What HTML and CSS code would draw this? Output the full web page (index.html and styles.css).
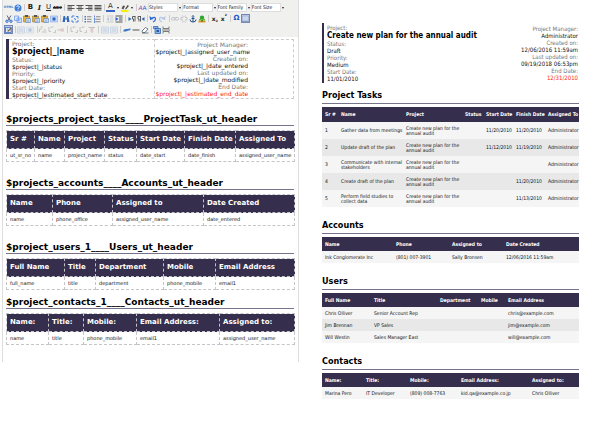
FILE: index.html
```html
<!DOCTYPE html>
<html lang="en">
<head>
<meta charset="utf-8">
<title>Project report template</title>
<link rel="stylesheet" href="styles.css">
</head>
<body>
<svg class="sprite" aria-hidden="true">
  <symbol id="help" viewBox="0 0 16 16"><circle cx="8" cy="8" r="7" fill="#3d7edb"/><path d="M5.500 6a2.500 2.500 0 1 1 3.500 2.300q-1 .5-1 1.700M8 11.500v2" fill="none" stroke="#fff" stroke-width="1.800"/></symbol>
  <symbol id="lines" viewBox="0 0 16 16"><path d="M1 3h14M1 6h14M1 9h14M1 12h14" stroke="#444" stroke-width="1.800"/></symbol>
  <symbol id="left" viewBox="0 0 16 16"><path d="M1 3h14M1 6h9M1 9h14M1 12h9" stroke="#444" stroke-width="1.800"/></symbol>
  <symbol id="center" viewBox="0 0 16 16"><path d="M1 3h14M4 6h8M1 9h14M4 12h8" stroke="#444" stroke-width="1.800"/></symbol>
  <symbol id="right" viewBox="0 0 16 16"><path d="M1 3h14M6 6h9M1 9h14M6 12h9" stroke="#444" stroke-width="1.800"/></symbol>
  <symbol id="marker" viewBox="0 0 16 16"><path d="M0 12h15v4H0z" fill="#f4f000"/><path d="M1 9l3-6 4 1-3 7zM8 10l5-8 3 2-6 7z" fill="#555"/></symbol>
  <symbol id="cut" viewBox="0 0 16 16"><path d="M4 1l6 10M12 1L6 11" stroke="#557" stroke-width="1.800"/><circle cx="4" cy="12.500" r="2.300" fill="none" stroke="#2565c7" stroke-width="2"/><circle cx="12" cy="12.500" r="2.300" fill="none" stroke="#2565c7" stroke-width="2"/></symbol>
  <symbol id="copy" viewBox="0 0 16 16"><path d="M1 2h8v9H1zM6 6h9v9H6z" fill="#dceaff" stroke="#5a8de0" stroke-width="1.300"/><path d="M8 9h5M8 12h5" stroke="#5a8de0"/></symbol>
  <symbol id="paste" viewBox="0 0 16 16"><path d="M1 2h12v12H1z" fill="#e5b23c" stroke="#8b6824"/><path d="M4 0h6v4H4z" fill="#555"/><path d="M6 7h9v8H6z" fill="#e6f0ff" stroke="#3465b8"/><path d="M8 10h5M8 12.500h5" stroke="#3465b8"/></symbol>
  <symbol id="all" viewBox="0 0 16 16"><path d="M1 2h14v12H1z" fill="#c8dafa" stroke="#7598db"/><path d="M5 5h6v6H5z" fill="#2b63c5"/></symbol>
  <symbol id="find" viewBox="0 0 16 16"><path d="M3 2h3l1 5h2l1-5h3l2 12h-5V9H6v5H1z" fill="#3268b8"/></symbol>
  <symbol id="replace" viewBox="0 0 16 16"><path d="M2 6V2h5M9 14h5v-4M10 3h4v4M2 10v4h4" fill="none" stroke="#3b7bdd" stroke-width="1.800"/><path d="M6 7l4 2" stroke="#3b7bdd" stroke-width="2"/></symbol>
  <symbol id="list" viewBox="0 0 16 16"><path d="M1 2h3v3H1zM1 7h3v3H1zM1 12h3v3H1z" fill="#4777c8"/><path d="M6 3.500h9M6 8.500h9M6 13.500h9" stroke="#666" stroke-width="1.500"/></symbol>
  <symbol id="numbers" viewBox="0 0 16 16"><path d="M3 1v4M2 7h2v3H2M2 12h2v3H2" fill="none" stroke="#3268c8" stroke-width="1.500"/><path d="M6 3.500h9M6 8.500h9M6 13.500h9" stroke="#666" stroke-width="1.500"/></symbol>
  <symbol id="outdent" viewBox="0 0 16 16"><path d="M1 2h14M8 6h7M8 10h7M1 14h14" stroke="#555" stroke-width="1.500"/><path d="M6 4v8L1 8z" fill="#2565c7"/></symbol>
  <symbol id="indent" viewBox="0 0 16 16"><path d="M1 2h14M8 6h7M8 10h7M1 14h14" stroke="#444" stroke-width="1.800"/><path d="M1 4v8l6-4z" fill="#2565c7"/></symbol>
  <symbol id="ltr" viewBox="0 0 16 16"><path d="M1 4v8l6-4z" fill="#3268b8"/><path d="M15 3H9v5h2v5M14 3v10" fill="none" stroke="#333" stroke-width="1.500"/></symbol>
  <symbol id="rtl" viewBox="0 0 16 16"><path d="M15 4v8L9 8z" fill="#3268b8"/><path d="M8 3H2v5h2v5M7 3v10" fill="none" stroke="#333" stroke-width="1.500"/></symbol>
  <symbol id="undo" viewBox="0 0 16 16"><path d="M5 7q8-5 8 1 0 4-5 6" fill="none" stroke="#2565d7" stroke-width="2.500"/><path d="M1 2l1 8 7-2z" fill="#2565d7"/></symbol>
  <symbol id="redo" viewBox="0 0 16 16"><path d="M11 7Q3 2 3 8q0 4 5 6" fill="none" stroke="#2565d7" stroke-width="2.500"/><path d="M15 2l-1 8-7-2z" fill="#2565d7"/></symbol>
  <symbol id="link" viewBox="0 0 16 16"><rect x="1" y="5" width="7" height="5" rx="2" fill="none" stroke="#557" stroke-width="2"/><rect x="8" y="5" width="7" height="5" rx="2" fill="none" stroke="#557" stroke-width="2"/></symbol>
  <symbol id="unlink" viewBox="0 0 16 16"><path d="M6 5H2v5h4M10 5h4v5h-4M5 1l2 3M11 1L9 4M5 15l2-3M11 15l-2-3" fill="none" stroke="#557" stroke-width="1.800"/></symbol>
  <symbol id="anchor" viewBox="0 0 16 16"><circle cx="8" cy="3" r="1.800" fill="none" stroke="#24538f" stroke-width="1.500"/><path d="M8 5v9M5 7h6M2 9q0 5 6 5t6-5" fill="none" stroke="#24538f" stroke-width="2"/></symbol>
  <symbol id="image" viewBox="0 0 16 16"><path d="M1 11h14v4H1z" fill="#d79b32"/><path d="M6 8h4v5H6z" fill="#765020"/><circle cx="8" cy="5.500" r="4.500" fill="#35a436"/><path d="M2 8h12v3H2z" fill="#5cbf35"/></symbol>
  <symbol id="guides" viewBox="0 0 16 16"><path d="M1 1h14v14H1z" fill="#c9d5ee" stroke="#8292b8"/><path d="M1 12h14v3H1z" fill="#8999bf"/></symbol>
  <symbol id="table" viewBox="0 0 16 16"><path d="M1 2h13v12H1z" fill="#fff" stroke="#3467b7" stroke-width="2"/><path d="M1 6h13M1 10h13M6 2v12" stroke="#6d95d8"/><path d="M14 3l-7 8" stroke="#7b5a2b" stroke-width="2.500"/></symbol>
  <symbol id="grid" viewBox="0 0 16 16"><path d="M1 2h14v12H1z" fill="#eaf2ff" stroke="#577fba" stroke-width="1.500"/><path d="M3 6h10M3 10h10" stroke="#3d70c4" stroke-width="2"/></symbol>
  <symbol id="row" viewBox="0 0 16 16"><path d="M1 12V6h5M6 12h9M9 8h5M3 2h5" fill="none" stroke="#555" stroke-width="1.800"/></symbol>
  <symbol id="remove" viewBox="0 0 16 16"><path d="M1 8h13" stroke="#555" stroke-width="2"/><path d="M8 4l5 8M13 4l-5 8" stroke="#d34343" stroke-width="1.500"/></symbol>
  <symbol id="column" viewBox="0 0 16 16"><path d="M2 2v9h4M6 4V2h5M11 13h4V8" fill="none" stroke="#555" stroke-width="1.800"/></symbol>
  <symbol id="drop" viewBox="0 0 16 16"><path d="M1 3h13M8 3v11" stroke="#555" stroke-width="2"/><path d="M4 5l7 6M11 5l-7 6" stroke="#d34343" stroke-width="1.500"/></symbol>
  <symbol id="pen" viewBox="0 0 16 16"><path d="M0 10q2-5 8-4l7-1v3l-7 2q-4 2-8 0z" fill="#3977c7"/></symbol>
  <symbol id="rule" viewBox="0 0 16 16"><path d="M1 8h14" stroke="#555" stroke-width="2"/></symbol>
  <symbol id="eraser" viewBox="0 0 16 16"><path d="M2 10l7-7 5 3-6 7H3z" fill="#fff" stroke="#456" stroke-width="1.500"/><path d="M2 14h13" stroke="#456" stroke-width="1.500"/></symbol>
  <symbol id="layer" viewBox="0 0 16 16"><path d="M1 1h9v4H1zM4 5h11v10H4z" fill="#8fb5e8" stroke="#2d62ac" stroke-width="1.500"/><path d="M7 8h5v4H7z" fill="#24579e"/></symbol>
  <symbol id="break" viewBox="0 0 16 16"><path d="M2 1v4h12V1M2 15v-4h12v4M0 8h16" fill="none" stroke="#555" stroke-width="1.500"/></symbol>
</svg>
<main class="page">
  <section class="editor">
    <div class="toolbar" role="toolbar" aria-label="Formatting">
      <div class="tools">
        <div class="group"><button class="html" aria-label="Edit HTML source">HTML</button><button aria-label="Help"><svg><use href="#help"/></svg></button></div>
        <div class="group"><button class="bold">B</button><button class="italic">I</button><button class="under">U</button><button class="strike">ABC</button></div>
        <div class="group"><button aria-label="Align left"><svg><use href="#left"/></svg></button><button aria-label="Align center"><svg><use href="#center"/></svg></button><button aria-label="Align right"><svg><use href="#right"/></svg></button><button aria-label="Justify"><svg><use href="#lines"/></svg></button></div>
        <div class="group"><button class="colour">A</button><button class="arrow" aria-label="Text colours"></button><button aria-label="Highlight"><svg><use href="#marker"/></svg></button><button class="arrow" aria-label="Highlight colours"></button></div>
        <div class="group"><button class="style"><i>A</i>A</button></div>
        <div class="pickers">
          <span class="picker"><select aria-label="Styles"><option>Styles</option></select></span>
          <span class="picker"><select aria-label="Format"><option>Format</option></select></span>
          <span class="picker"><select aria-label="Font family"><option>Font Family</option></select></span>
          <span class="picker"><select aria-label="Font size"><option>Font Size</option></select></span>
        </div>
      </div>
      <div class="tools tools-edit">
        <div class="group"><button aria-label="Cut"><svg><use href="#cut"/></svg></button><button aria-label="Copy"><svg><use href="#copy"/></svg></button><button aria-label="Paste"><svg><use href="#paste"/></svg></button><button aria-label="Paste text"><svg><use href="#paste"/></svg></button><button aria-label="Paste from Word"><svg><use href="#paste"/></svg></button><button aria-label="Select all"><svg><use href="#all"/></svg></button></div>
        <div class="group"><button aria-label="Find"><svg><use href="#find"/></svg></button><button aria-label="Replace"><svg><use href="#replace"/></svg></button></div>
        <div class="group"><button aria-label="Bulleted list"><svg><use href="#list"/></svg></button><button aria-label="Numbered list"><svg><use href="#numbers"/></svg></button></div>
        <div class="group"><button disabled aria-label="Outdent"><svg><use href="#outdent"/></svg></button><button aria-label="Indent"><svg><use href="#indent"/></svg></button></div>
        <div class="group"><button aria-label="Left to right"><svg><use href="#ltr"/></svg></button><button aria-label="Right to left"><svg><use href="#rtl"/></svg></button></div>
        <div class="group"><button aria-label="Undo"><svg><use href="#undo"/></svg></button><button disabled aria-label="Redo"><svg><use href="#redo"/></svg></button></div>
        <div class="group"><button disabled aria-label="Link"><svg><use href="#link"/></svg></button><button disabled aria-label="Unlink"><svg><use href="#unlink"/></svg></button><button aria-label="Anchor"><svg><use href="#anchor"/></svg></button><button aria-label="Image"><svg><use href="#image"/></svg></button></div>
        <div class="group"><button class="script" aria-label="Subscript">x<sub>2</sub></button><button class="script" aria-label="Superscript">x<sup>2</sup></button></div>
        <div class="group"><button class="omega">Ω</button><button class="active" aria-label="Show guidelines"><svg><use href="#guides"/></svg></button></div>
      </div>
      <div class="tools tools-table">
        <div class="group"><button class="active" aria-label="Table"><svg><use href="#table"/></svg></button></div>
        <div class="group"><button disabled aria-label="Row properties"><svg><use href="#grid"/></svg></button><button disabled aria-label="Cell properties"><svg><use href="#all"/></svg></button></div>
        <div class="group"><button disabled aria-label="Row before"><svg><use href="#row"/></svg></button><button disabled aria-label="Row after"><svg><use href="#column"/></svg></button><button disabled aria-label="Delete row"><svg><use href="#remove"/></svg></button></div>
        <div class="group"><button disabled aria-label="Column before"><svg><use href="#column"/></svg></button><button disabled aria-label="Column after"><svg><use href="#column"/></svg></button><button disabled aria-label="Delete column"><svg><use href="#drop"/></svg></button></div>
        <div class="group"><button disabled aria-label="Split cells"><svg><use href="#grid"/></svg></button><button disabled aria-label="Merge cells"><svg><use href="#grid"/></svg></button></div>
        <div class="group"><button aria-label="Draw"><svg><use href="#pen"/></svg></button><button aria-label="Horizontal rule"><svg><use href="#rule"/></svg></button><button aria-label="Remove formatting"><svg><use href="#eraser"/></svg></button></div>
        <div class="group"><button aria-label="Layer"><svg><use href="#layer"/></svg></button><button aria-label="Page break"><svg><use href="#break"/></svg></button></div>
      </div>
    </div>
    <div class="canvas">
      <header class="summary">
        <div class="facts">
          <p class="label">Project:</p><p class="name">$project|_|name</p>
          <p class="label">Status:</p><p>$project|_|status</p>
          <p class="label">Priority:</p><p>$project|_|priority</p>
          <p class="label">Start Date:</p><p>$project|_|estimated_start_date</p>
        </div>
        <div class="facts facts-end">
          <p class="label">Project Manager:</p><p>$project|_|assigned_user_name</p>
          <p class="label">Created on:</p><p>$project|_|date_entered</p>
          <p class="label">Last updated on:</p><p>$project|_|date_modified</p>
          <p class="label">End Date:</p><p class="due">$project|_|estimated_end_date</p>
        </div>
      </header>
      <h2>$projects_project_tasks____ProjectTask_ut_header</h2>
      <table class="tasks">
        <thead><tr><th>Sr #</th><th>Name</th><th>Project</th><th>Status</th><th>Start Date</th><th>Finish Date</th><th>Assigned To</th></tr></thead>
        <tbody><tr><td>ut_sr_no</td><td>name</td><td>project_name</td><td>status</td><td>date_start</td><td>date_finish</td><td>assigned_user_name</td></tr></tbody>
      </table>
      <h2>$projects_accounts____Accounts_ut_header</h2>
      <table class="accounts">
        <thead><tr><th>Name</th><th>Phone</th><th>Assigned to</th><th>Date Created</th></tr></thead>
        <tbody><tr><td>name</td><td>phone_office</td><td>assigned_user_name</td><td>date_entered</td></tr></tbody>
      </table>
      <h2>$project_users_1____Users_ut_header</h2>
      <table class="users">
        <thead><tr><th>Full Name</th><th>Title</th><th>Department</th><th>Mobile</th><th>Email Address</th></tr></thead>
        <tbody><tr><td>full_name</td><td>title</td><td>department</td><td>phone_mobile</td><td>email1</td></tr></tbody>
      </table>
      <h2 class="tight">$project_contacts_1____Contacts_ut_header</h2>
      <table class="contacts">
        <thead><tr><th>Name:</th><th>Title:</th><th>Mobile:</th><th>Email Address:</th><th>Assigned to:</th></tr></thead>
        <tbody><tr><td>name</td><td>title</td><td>phone_mobile</td><td>email1</td><td>assigned_user_name</td></tr></tbody>
      </table>
    </div>
  </section>
  <article class="report">
    <header class="summary">
      <div class="facts">
        <p class="label">Project:</p><p class="name">Create new plan for the annual audit</p>
        <p class="label">Status:</p><p>Draft</p>
        <p class="label">Priority:</p><p>Medium</p>
        <p class="label">Start Date:</p><p>11/01/2010</p>
      </div>
      <div class="facts facts-end">
        <p class="label">Project Manager:</p><p>Administrator</p>
        <p class="label">Created on:</p><p>12/06/2016 11:59am</p>
        <p class="label">Last updated on:</p><p>09/19/2018 06:53pm</p>
        <p class="label">End Date:</p><p class="due">12/31/2010</p>
      </div>
    </header>
    <h2 class="tight">Project Tasks</h2>
    <table class="tasks">
      <thead><tr><th>Sr #</th><th>Name</th><th>Project</th><th>Status</th><th>Start Date</th><th>Finish Date</th><th>Assigned To</th></tr></thead>
      <tbody>
        <tr><td>1</td><td>Gather data from meetings</td><td>Create new plan for the annual audit</td><td></td><td>11/20/2010</td><td>11/20/2010</td><td>Administrator</td></tr>
        <tr><td>2</td><td>Update draft of the plan</td><td>Create new plan for the annual audit</td><td></td><td>11/12/2010</td><td>11/19/2010</td><td>Administrator</td></tr>
        <tr><td>3</td><td>Communicate with internal stakeholders</td><td>Create new plan for the annual audit</td><td></td><td></td><td></td><td>Administrator</td></tr>
        <tr><td>4</td><td>Create draft of the plan</td><td>Create new plan for the annual audit</td><td></td><td></td><td>11/20/2010</td><td>Administrator</td></tr>
        <tr><td>5</td><td>Perform field studies to collect data</td><td>Create new plan for the annual audit</td><td></td><td></td><td>11/13/2010</td><td>Administrator</td></tr>
      </tbody>
    </table>
    <h2>Accounts</h2>
    <table class="accounts">
      <thead><tr><th>Name</th><th>Phone</th><th>Assigned to</th><th>Date Created</th></tr></thead>
      <tbody><tr><td>Ink Conglomerate Inc</td><td>(801) 007-3901</td><td>Sally Bronsen</td><td>12/06/2016 11:59am</td></tr></tbody>
    </table>
    <h2>Users</h2>
    <table class="users">
      <thead><tr><th>Full Name</th><th>Title</th><th>Department</th><th>Mobile</th><th>Email Address</th></tr></thead>
      <tbody>
        <tr><td>Chris Olliver</td><td>Senior Account Rep</td><td></td><td></td><td>chris@example.com</td></tr>
        <tr><td>Jim Brennan</td><td>VP Sales</td><td></td><td></td><td>jim@example.com</td></tr>
        <tr><td>Will Westin</td><td>Sales Manager East</td><td></td><td></td><td>will@example.com</td></tr>
      </tbody>
    </table>
    <h2>Contacts</h2>
    <table class="contacts">
      <thead><tr><th>Name:</th><th>Title:</th><th>Mobile:</th><th>Email Address:</th><th>Assigned to:</th></tr></thead>
      <tbody><tr><td>Marina Pero</td><td>IT Developer</td><td>(809) 008-7763</td><td>kid.qa@example.co.jp</td><td>Chris Olliver</td></tr></tbody>
    </table>
  </article>
</main>
</body>
</html>
```
FILE: styles.css
```css
* { box-sizing: border-box; }
body { margin: 0; background: #fff; color: #111; font-family: "DejaVu Sans", sans-serif; font-size: 6px; line-height: 7px; }
p, h2 { margin: 0; }
.sprite { display: none; }
.page { display: grid; grid-template-columns: minmax(0, 299fr) minmax(0, 301fr); align-items: start; }

.editor { margin-left: 2px; border: 1px solid #ddd; border-top: 0; border-bottom: 0; padding-bottom: 17px; }
.toolbar { background: #f0f0ee; padding: 2px 1px; margin-bottom: 2px; }
.tools { display: flex; height: 11px; align-items: center; gap: 4px; }
.tools-edit { width: 84%; justify-content: space-between; gap: 0; }
.tools-table { width: 57%; justify-content: space-between; gap: 0; }
.group { display: flex; position: relative; }
.group + .group::before { content: ""; position: absolute; left: -2px; top: 1px; bottom: 1px; border-left: 1px solid #ccc; }
.group button { width: 9px; height: 9px; padding: 0; border: 0; background: none; color: #222; font: 7px/9px "DejaVu Sans", sans-serif; display: flex; align-items: center; justify-content: center; }
.group svg { width: 8px; height: 8px; }
.group button:disabled { opacity: .3; }
.group .active { background: #c9d4ea; border: 1px solid #7385b5; }
.group .bold { font-weight: bold; }
.group .italic { font-weight: bold; font-style: italic; font-family: "DejaVu Serif", serif; }
.group .under { text-decoration: underline; }
.group .strike { font-size: 4px; font-weight: bold; text-decoration: line-through; }
.group .html { font-size: 3px; font-weight: bold; color: #3475cc; }
.group .colour { color: #333; border-bottom: 2px solid #3465c4; line-height: 7px; }
.group .style { color: #4a55c4; font-size: 6px; }
.group .style i { color: #a044b0; }
.group .script { font-size: 6px; font-weight: bold; }
.script sub, .script sup { font-size: 3px; line-height: 3px; }
.script sub { align-self: flex-end; }
.script sup { align-self: flex-start; }
.group .omega { color: #2458c4; font-weight: bold; }
.group .arrow { width: 5px; }
.arrow::before { content: ""; border: 1px solid transparent; border-top: 2px solid #222; border-bottom: 0; }
.pickers { display: flex; flex: 1; gap: 1px; margin-left: -3px; padding-right: 13px; }
.picker { flex: 1; display: flex; align-items: center; gap: 1px; }
.picker::after { content: ""; border: 1px solid transparent; border-top: 2px solid #222; border-bottom: 0; }
.picker select { appearance: none; flex: 1; min-width: 0; height: 9px; padding: 0; border: 1px solid #ddd; border-radius: 0; background: #fff; color: #222; font: 5px/7px "DejaVu Sans Condensed", "DejaVu Sans", sans-serif; }

.canvas { padding: 0 4px 0 3px; }
.summary { display: grid; grid-template-columns: minmax(0, 148fr) minmax(0, 140fr); border-left: 3px solid #352e4c; }
.facts { padding: 1px 3px; white-space: nowrap; }
.facts .label { color: #777; }
.facts .name { font-size: 8px; line-height: 9px; font-weight: bold; color: #000; }
.facts .due { color: #f22; }
.facts-end { text-align: right; }
.canvas .facts { border: 1px dashed #ccc; border-left: 0; padding-top: 0; padding-bottom: 0; }
.canvas .facts-end { padding: 1px 45px 0 0; }

h2 { font-size: 9px; line-height: 12px; font-weight: bold; color: #000; border-bottom: 1px solid #77738c; margin: 15px 0 4px; white-space: nowrap; }
h2.tight { margin-top: 6px; }
.canvas .summary + h2 { margin-top: 14px; }
table { width: 100%; table-layout: fixed; border-collapse: collapse; text-align: left; }
th, td { padding: 0 0 0 3px; }
th { background: #352e4c; color: #fff; font-weight: bold; white-space: nowrap; }
.canvas th, .canvas td { border: 1px dashed #c4c4ca; }
.canvas th { height: 18px; font-size: 7px; }
.canvas td { height: 13px; font-size: 5px; }

.canvas .tasks th:nth-child(1) { width: 28px; }
.canvas .tasks th:nth-child(2) { width: 30px; }
.canvas .tasks th:nth-child(3) { width: 40px; }
.canvas .tasks th:nth-child(4) { width: 32px; }
.canvas .tasks th:nth-child(5) { width: 48px; }
.canvas .tasks th:nth-child(6) { width: 51px; }
.canvas .tasks th:nth-child(7) { width: 59px; }
.canvas .accounts th:nth-child(1) { width: 46px; }
.canvas .accounts th:nth-child(2) { width: 60px; }
.canvas .accounts th:nth-child(3) { width: 91px; }
.canvas .accounts th:nth-child(4) { width: 91px; }
.canvas .users th:nth-child(1) { width: 58px; }
.canvas .users th:nth-child(2) { width: 31px; }
.canvas .users th:nth-child(3) { width: 68px; }
.canvas .users th:nth-child(4) { width: 52px; }
.canvas .users th:nth-child(5) { width: 79px; }
.canvas .contacts th:nth-child(1) { width: 42px; }
.canvas .contacts th:nth-child(2) { width: 35px; }
.canvas .contacts th:nth-child(3) { width: 53px; }
.canvas .contacts th:nth-child(4) { width: 83px; }
.canvas .contacts th:nth-child(5) { width: 75px; }

.report { padding: 23px 21px 24px 23px; font-family: "DejaVu Sans Condensed", "DejaVu Sans", sans-serif; }
.report .summary { grid-template-columns: 1fr auto; border-left-width: 2px; }
.report .facts-end { padding: 2px 1px 0 0; }
.report h2 { line-height: 13px; padding-bottom: 1px; margin: 12px 0 3px; }
.report h2.tight { margin-top: 6px; }
.report th { height: 14px; font-size: 5px; }
.report td { height: 12px; font-size: 5px; line-height: 5px; }
.report .tasks th { height: 15px; }
.report .tasks td { height: 17px; }
.report tbody tr { background: #f5f5f5; }
.report tbody tr:nth-child(even) { background: #e8e8e8; }
.report .tasks th:nth-child(1) { width: 16px; }
.report .tasks th:nth-child(2) { width: 65px; }
.report .tasks th:nth-child(3) { width: 59px; }
.report .tasks th:nth-child(4) { width: 21px; }
.report .tasks th:nth-child(5) { width: 30px; }
.report .tasks th:nth-child(6) { width: 32px; }
.report .tasks th:nth-child(7) { width: 34px; }
.report .accounts th:nth-child(1) { width: 71px; }
.report .accounts th:nth-child(2) { width: 56px; }
.report .accounts th:nth-child(3) { width: 54px; }
.report .accounts th:nth-child(4) { width: 76px; }
.report .users th:nth-child(1) { width: 49px; }
.report .users th:nth-child(2) { width: 66px; }
.report .users th:nth-child(3) { width: 41px; }
.report .users th:nth-child(4) { width: 27px; }
.report .users th:nth-child(5) { width: 74px; }
.report .contacts th:nth-child(1) { width: 41px; }
.report .contacts th:nth-child(2) { width: 44px; }
.report .contacts th:nth-child(3) { width: 51px; }
.report .contacts th:nth-child(4) { width: 71px; }
.report .contacts th:nth-child(5) { width: 50px; }
```
